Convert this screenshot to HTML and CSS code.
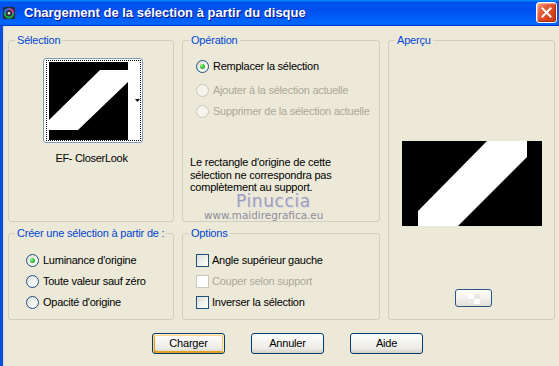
FILE: index.html
```html
<!DOCTYPE html>
<html lang="fr">
<head>
<meta charset="utf-8">
<title>Chargement de la sélection à partir du disque</title>
<link rel="stylesheet" href="styles.css">
</head>
<body>
<div class="window">
  <div class="titlebar">
    <div class="title">
      <svg class="app-icon" width="12" height="12" viewBox="0 0 12 12">
        <rect x="0" y="0" width="12" height="12" rx="1.5" fill="#2b2b33"/>
        <circle cx="6" cy="6.3" r="4.2" fill="none" stroke="#19b04a" stroke-width="2"/>
        <path d="M6 2.1 A4.2 4.2 0 0 1 10.2 6.3" fill="none" stroke="#d42ca0" stroke-width="2"/>
        <path d="M1.8 6.3 A4.2 4.2 0 0 1 6 2.1" fill="none" stroke="#2a6ce0" stroke-width="2"/>
        <circle cx="6" cy="6.3" r="1.3" fill="#e8e8f0"/>
      </svg>
      <span class="title-text">Chargement de la sélection à partir du disque</span>
    </div>
    <button class="close" type="button" aria-label="Fermer">
      <svg width="11" height="11" viewBox="0 0 11 11"><path d="M1.5 1.5 L9.5 9.5 M9.5 1.5 L1.5 9.5" stroke="#fff" stroke-width="2" stroke-linecap="square"/></svg>
    </button>
  </div>

  <div class="client">
    <div class="groups">
      <fieldset class="group g-selection">
        <legend>Sélection</legend>
        <div class="thumb">
          <div class="thumb-focus">
            <svg class="thumb-img" width="79" height="78" viewBox="0 0 79 78">
              <rect width="79" height="78" fill="#000"/>
              <polygon points="0,58 51,8 79,8 79,20 29,68 0,68" fill="#fff"/>
            </svg>
            <svg class="thumb-arrow" width="5" height="3" viewBox="0 0 5 3"><polygon points="0,0 5,0 2.5,3" fill="#000"/></svg>
          </div>
        </div>
        <div class="thumb-label">EF- CloserLook</div>
      </fieldset>

      <fieldset class="group g-operation">
        <legend>Opération</legend>
        <div class="choices op-choices">
          <label class="radio checked"><span class="rb"></span>Remplacer la sélection</label>
          <label class="radio disabled"><span class="rb"></span>Ajouter à la sélection actuelle</label>
          <label class="radio disabled"><span class="rb"></span>Supprimer de la sélection actuelle</label>
        </div>
        <p class="note">Le rectangle d'origine de cette<br>sélection ne correspondra pas<br>complètement au support.</p>
      </fieldset>

      <fieldset class="group g-preview">
        <legend>Aperçu</legend>
        <svg class="preview-img" width="140" height="85" viewBox="0 0 140 85">
          <rect width="140" height="85" fill="#000"/>
          <polygon points="16,85 16,70 85,0 125,0 125,16 56,85" fill="#fff"/>
        </svg>
        <button class="mini-btn" type="button" aria-label="Arrière-plan"><span class="checker"></span></button>
      </fieldset>

      <fieldset class="group g-create">
        <legend>Créer une sélection à partir de :</legend>
        <div class="choices create-choices">
          <label class="radio checked"><span class="rb"></span>Luminance d'origine</label>
          <label class="radio"><span class="rb"></span>Toute valeur sauf zéro</label>
          <label class="radio"><span class="rb"></span>Opacité d'origine</label>
        </div>
      </fieldset>

      <fieldset class="group g-options">
        <legend>Options</legend>
        <div class="choices opt-choices">
          <label class="check"><span class="cb"></span>Angle supérieur gauche</label>
          <label class="check disabled"><span class="cb"></span>Couper selon support</label>
          <label class="check"><span class="cb"></span>Inverser la sélection</label>
        </div>
      </fieldset>
    </div>

    <div class="actions">
      <button class="btn default" type="button">Charger</button>
      <button class="btn" type="button">Annuler</button>
      <button class="btn" type="button">Aide</button>
    </div>

    <div class="wm wm-name">Pinuccia</div>
    <div class="wm wm-url">www.maidiregrafica.eu</div>
  </div>
</div>
</body>
</html>
```

FILE: styles.css
```css
html, body {
  margin: 0;
  padding: 0;
}

body {
  width: 559px;
  height: 366px;
  overflow: hidden;
  background: #ECE9D8;
  font-family: "Liberation Sans", Arial, sans-serif;
  font-size: 11px;
  color: #000;
}

.window {
  width: 559px;
  height: 366px;
  display: flex;
  flex-direction: column;
}

/* ---------- Title bar ---------- */
.titlebar {
  height: 26px;
  flex: none;
  display: flex;
  justify-content: space-between;
  align-items: flex-start;
  padding: 0 2px 0 0;
  box-sizing: border-box;
  background: linear-gradient(180deg, #0997ff 0%, #0053ee 8%, #0050ee 40%, #0066ff 88%, #0066ff 93%, #005bff 95%, #003dd7 96%, #003dd7 100%);
}

.title {
  display: flex;
  align-items: center;
  height: 25px;
  padding-left: 3px;
}

.app-icon {
  display: block;
  margin-top: 1px;
}

.title-text {
  margin-left: 9px;
  font-family: "Liberation Sans", Arial, sans-serif;
  font-weight: bold;
  font-size: 13px;
  color: #fff;
  text-shadow: 1px 1px 0 #0f1089;
  white-space: nowrap;
}

.close {
  margin-top: 2px;
  width: 21px;
  height: 21px;
  padding: 0;
  box-sizing: border-box;
  border: 1px solid #fff;
  border-radius: 3px;
  background: linear-gradient(135deg, #f3a58e 0%, #e5623f 30%, #d8451e 65%, #c23a17 100%);
  box-shadow: inset -1px -1px 1px rgba(120, 20, 0, 0.5), inset 1px 1px 1px rgba(255, 220, 200, 0.6);
  display: flex;
  align-items: center;
  justify-content: center;
}

.close svg {
  display: block;
}

/* ---------- Client area ---------- */
.client {
  flex: 1;
  position: relative;
  border-left: 3px solid #0a4fe4;
  box-shadow: inset 1px 0 0 #d9d6cb;
  padding: 8px 0 0 5px;
}

.groups {
  display: grid;
  grid-template-columns: 166px 198px 167px;
  grid-template-rows: 188px 93px;
  column-gap: 8px;
  row-gap: 5px;
}

.group {
  margin: 0;
  padding: 0;
  min-width: 0;
  border: 1px solid #d0d0bf;
  border-radius: 3px;
  box-sizing: border-box;
}

.group legend {
  margin-left: 6px;
  padding: 0 2px;
  color: #0046d5;
  line-height: 13px;
  letter-spacing: -0.2px;
}

.g-selection { grid-column: 1; grid-row: 1; }
.g-operation { grid-column: 2; grid-row: 1; }
.g-preview   { grid-column: 3; grid-row: 1 / span 2; }
.g-create    { grid-column: 1; grid-row: 2; }
.g-options   { grid-column: 2; grid-row: 2; }

/* ---------- Selection thumbnail ---------- */
.thumb {
  margin: 11px 0 0 34px;
  width: 100px;
  height: 85px;
  box-sizing: border-box;
  border: 1px solid #7f9db9;
  border-radius: 3px;
  background: #fff;
  padding: 1px 1px 1px 2px;
  display: flex;
}

.thumb-focus {
  flex: 1;
  border: 1px dotted #000;
  padding: 1px 0 0 2px;
  display: flex;
  align-items: flex-start;
}

.thumb-img {
  display: block;
  flex: none;
}

.thumb-arrow {
  display: block;
  margin-left: auto;
  margin-top: 37px;
}

.thumb-label {
  margin-top: 9px;
  text-align: center;
  padding-left: 1px;
  line-height: 13px;
  letter-spacing: -0.3px;
}

/* ---------- Radios & checkboxes ---------- */
.choices {
  display: flex;
  flex-direction: column;
}

.radio,
.check {
  display: flex;
  align-items: center;
  height: 13px;
  line-height: 13px;
  white-space: nowrap;
  letter-spacing: -0.25px;
}

.rb {
  flex: none;
  width: 13px;
  height: 13px;
  box-sizing: border-box;
  border: 1px solid #1c5180;
  border-radius: 50%;
  background: linear-gradient(135deg, #dcdcd7 0%, #f6f6f3 60%, #ffffff 100%);
  display: flex;
  align-items: center;
  justify-content: center;
  margin-right: 4px;
}

.radio.checked .rb::after {
  content: "";
  width: 5px;
  height: 5px;
  border-radius: 50%;
  background: radial-gradient(circle at 35% 35%, #a6f59a 0%, #3cc43a 45%, #1f9a1f 100%);
}

.radio.disabled {
  color: #aca899;
}

.radio.disabled .rb {
  border-color: #cac8bb;
  background: #f4f3ec;
}

.cb {
  flex: none;
  width: 13px;
  height: 13px;
  box-sizing: border-box;
  border: 1px solid #1c5180;
  background: linear-gradient(135deg, #dcdcd7 0%, #f3f3ef 60%, #ffffff 100%);
  margin-right: 3px;
}

.check.disabled {
  color: #aca899;
}

.check.disabled .cb {
  border-color: #cac8bb;
  background: #ffffff;
}

.op-choices {
  margin: 13px 0 0 13px;
}

.op-choices .radio:nth-child(1) { margin-bottom: 11px; }
.op-choices .radio:nth-child(2) { margin-bottom: 8px; }

.note {
  margin: 38px 0 0 7px;
  line-height: 12.5px;
  letter-spacing: -0.2px;
}

.create-choices {
  margin: 14px 0 0 17px;
  gap: 8px;
}

.opt-choices {
  margin: 14px 0 0 13px;
  gap: 8px;
}

/* ---------- Preview ---------- */
.g-preview {
  display: flex;
  flex-direction: column;
  align-items: center;
}

.preview-img {
  display: block;
  margin-top: 94px;
  margin-left: 1px;
}

.mini-btn {
  margin-top: 63px;
  margin-left: 4px;
  width: 37px;
  height: 18px;
  padding: 0;
  box-sizing: border-box;
  border: 1px solid #2c5482;
  border-radius: 3px;
  background: linear-gradient(180deg, #ffffff 0%, #f2f1ec 50%, #e2e0d6 100%);
  display: flex;
  align-items: center;
  justify-content: center;
}

.checker {
  display: block;
  width: 12px;
  height: 10px;
  margin-top: 2px;
  background:
    linear-gradient(90deg, #ffffff 50%, #ebeae4 50%) 0 0 / 12px 5px no-repeat,
    linear-gradient(90deg, #ebeae4 50%, #ffffff 50%) 0 5px / 12px 5px no-repeat;
}

/* ---------- Bottom buttons ---------- */
.actions {
  display: flex;
  gap: 26px;
  margin-top: 13px;
  padding-left: 144px;
}

.btn {
  width: 73px;
  height: 21px;
  padding: 0;
  box-sizing: border-box;
  border: 1px solid #003c74;
  border-radius: 3px;
  background: linear-gradient(180deg, #ffffff 0%, #f5f4f0 40%, #ecebe6 75%, #d6d0c5 100%);
  font-family: "Liberation Sans", Arial, sans-serif;
  font-size: 11px;
  color: #000;
  line-height: 19px;
  letter-spacing: -0.2px;
}

.btn.default {
  box-shadow: inset -1px 1px #fff0cf, inset 1px 2px #fdd889, inset -2px 2px #fbc761, inset 2px -2px #e5a01a;
}

/* ---------- Watermark overlay ---------- */
.wm {
  position: absolute;
  white-space: nowrap;
  pointer-events: none;
}

.wm-name {
  left: 233px;
  top: 169px;
  font-family: "DejaVu Sans", sans-serif;
  font-size: 17px;
  line-height: 12px;
  letter-spacing: 0.6px;
  color: #a09ebc;
  text-shadow: 1px 1px 0 #dcdae6;
}

.wm-url {
  left: 201px;
  top: 184px;
  font-family: "DejaVu Sans", sans-serif;
  font-size: 10.4px;
  line-height: 11px;
  color: #8e8c9c;
}
```
